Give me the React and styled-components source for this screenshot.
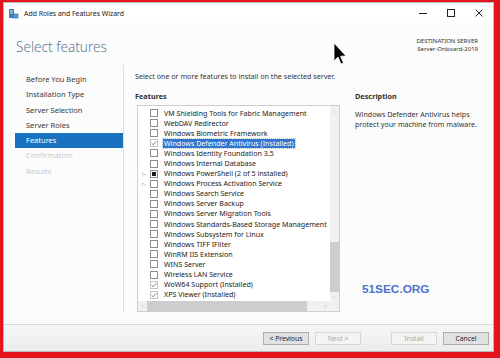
import React from "react";
import styled, { createGlobalStyle } from "styled-components";

const GlobalStyle = createGlobalStyle`
  html, body { margin: 0; padding: 0; background: #e3141b; }
  body { font-family: "Segoe UI", "Noto Sans", "Open Sans", sans-serif; }
`;

const Frame = styled.div`
  width: 500px;
  height: 358px;
  box-sizing: border-box;
  padding: 2px 6px 6px 3px;
  background: #e3141b;
  position: relative;
`;

const Window = styled.div`
  width: 100%;
  height: 100%;
  box-sizing: border-box;
  background: #fcfcfc;
  border: 1px solid #b9b9b9;
  display: flex;
  flex-direction: column;
  overflow: hidden;
`;

const TitleBar = styled.div`
  height: 20px;
  display: flex;
  align-items: center;
  padding-left: 4px;
  background: #ffffff;
  font-size: 6.9px;
  color: #1a1a1a;
`;

const TitleText = styled.span`
  margin-left: 5px;
  flex: 1;
`;

const WinButton = styled.div`
  width: 28px;
  height: 20px;
  display: flex;
  align-items: center;
  justify-content: center;
`;

const Header = styled.div`
  height: 42px;
  display: flex;
  justify-content: space-between;
  align-items: flex-start;
  padding: 0 15px 0 12px;
`;

const Heading = styled.h1`
  margin: 14px 0 0;
  font-size: 13.6px;
  font-weight: 300;
  color: #5d7b92;
`;

const Destination = styled.div`
  margin-top: 14px;
  font-size: 6px;
  line-height: 8px;
  text-align: right;
  color: #333;
`;

const Body = styled.div`
  flex: 1;
  display: flex;
  min-height: 0;
`;

const Nav = styled.div`
  width: 108px;
  padding: 7px 0 0 11px;
  border-right: 1px solid #dedede;
  margin-bottom: 12px;
  display: flex;
  flex-direction: column;
`;

const NavItem = styled.div`
  height: 15.3px;
  line-height: 15.3px;
  padding-left: 11px;
  font-size: 7.5px;
  color: ${(p) => (p.$disabled ? "#c9c9c9" : p.$active ? "#ffffff" : "#3a3a3a")};
  background: ${(p) => (p.$active ? "#1a71bf" : "transparent")};
`;

const Main = styled.div`
  flex: 1;
  display: flex;
  padding: 6px 0 0 11px;
`;

const Column = styled.div`
  width: 205px;
  flex-shrink: 0;
  display: flex;
  flex-direction: column;
`;

const Intro = styled.div`
  font-size: 7.15px;
  color: #333;
  height: 14px;
  white-space: nowrap;
`;

const Label = styled.div`
  font-size: 7.3px;
  font-weight: 700;
  color: #333;
  margin-top: 6px;
`;

const ListBox = styled.div`
  margin: 4px 0 0 2px;
  width: 203px;
  height: 207px;
  box-sizing: border-box;
  border: 1px solid #cfcfcf;
  background: #fff;
  display: flex;
  flex-direction: column;
`;

const ListArea = styled.div`
  flex: 1;
  display: flex;
  min-height: 0;
`;

const Rows = styled.div`
  flex: 1;
  min-width: 0;
  padding-top: 2px;
  overflow: hidden;
`;

const Row = styled.div`
  height: 10.1px;
  display: flex;
  align-items: center;
  white-space: nowrap;
  font-size: 7.1px;
  color: #222;
`;

const Expander = styled.div`
  width: 12px;
  flex-shrink: 0;
  padding-left: 4px;
  box-sizing: border-box;
  font-size: 5px;
  color: #888;
`;

const Box = styled.div`
  width: 8px;
  height: 8px;
  box-sizing: border-box;
  border: 1px solid ${(p) => (p.$installed ? "#c4c4c4" : "#8d8d8d")};
  background: #fff;
  display: flex;
  align-items: center;
  justify-content: center;
  flex-shrink: 0;
`;

const Mark = styled.div`
  width: 4px;
  height: 4px;
  background: #1b1b1b;
`;

const RowText = styled.span`
  margin-left: 5px;
  padding: 0 1px;
  line-height: 9px;
  flex-shrink: 0;
  color: ${(p) => (p.$selected ? "#fff" : "#222")};
  background: ${(p) => (p.$selected ? "#2f76cc" : "transparent")};
  outline: ${(p) => (p.$selected ? "1px dotted #9bc1ee" : "none")};
`;

const VScroll = styled.div`
  width: 9px;
  flex-shrink: 0;
  background: #f0f0f0;
  display: flex;
  flex-direction: column;
  align-items: stretch;
`;

const Arrow = styled.div`
  height: 9px;
  display: flex;
  align-items: center;
  justify-content: center;
  font-size: 5px;
  color: #a8a8a8;
  width: ${(p) => (p.$h ? "9px" : "auto")};
`;

const ScrollSpace = styled.div`
  flex: ${(p) => p.$grow};
`;

const Thumb = styled.div`
  background: #cdcdcd;
  flex: ${(p) => p.$grow};
`;

const HScroll = styled.div`
  height: 10px;
  display: flex;
  background: #f0f0f0;
`;

const Description = styled.div`
  margin-left: 15px;
  display: flex;
  flex-direction: column;
`;

const DescText = styled.div`
  margin-top: 8px;
  font-size: 7.1px;
  line-height: 10px;
  color: #333;
  width: 132px;
`;

const Watermark = styled.div`
  margin: 153px 0 0 7px;
  font-family: "Liberation Sans", Arial, sans-serif;
  font-weight: 700;
  font-size: 11.8px;
  color: #4d72cf;
`;

const Footer = styled.div`
  height: 26px;
  border-top: 1px solid #d9d9d9;
  background: linear-gradient(#f6f6f6, #ececec);
  display: flex;
  align-items: center;
  padding-left: 259px;
  gap: 6px;
`;

const Button = styled.div`
  width: 46px;
  height: 13px;
  box-sizing: border-box;
  border: 1px solid ${(p) => (p.$disabled ? "#d6d6d6" : "#adadad")};
  background: ${(p) => (p.$disabled ? "#f4f4f4" : "#e1e1e1")};
  color: ${(p) => (p.$disabled ? "#a8a8a8" : "#222")};
  font-size: 6.8px;
  display: flex;
  align-items: center;
  justify-content: center;
  margin-left: ${(p) => p.$gap || 0}px;
`;

const Cursor = styled.svg`
  position: absolute;
  left: 333px;
  top: 42px;
`;

const features = [
  { name: "VM Shielding Tools for Fabric Management" },
  { name: "WebDAV Redirector" },
  { name: "Windows Biometric Framework" },
  { name: "Windows Defender Antivirus (Installed)", installed: true, selected: true },
  { name: "Windows Identity Foundation 3.5" },
  { name: "Windows Internal Database" },
  { name: "Windows PowerShell (2 of 5 installed)", partial: true, expand: true },
  { name: "Windows Process Activation Service", expand: true },
  { name: "Windows Search Service" },
  { name: "Windows Server Backup" },
  { name: "Windows Server Migration Tools" },
  { name: "Windows Standards-Based Storage Management" },
  { name: "Windows Subsystem for Linux" },
  { name: "Windows TIFF IFilter" },
  { name: "WinRM IIS Extension" },
  { name: "WINS Server" },
  { name: "Wireless LAN Service" },
  { name: "WoW64 Support (Installed)", installed: true },
  { name: "XPS Viewer (Installed)", installed: true },
];

const navItems = [
  { label: "Before You Begin" },
  { label: "Installation Type" },
  { label: "Server Selection" },
  { label: "Server Roles" },
  { label: "Features", active: true },
  { label: "Confirmation", disabled: true },
  { label: "Results", disabled: true },
];

const Check = () => (
  <svg width="6" height="6" viewBox="0 0 6 6">
    <path d="M0.6 3.2 L2.3 4.8 L5.4 1" fill="none" stroke="#8a8a8a" strokeWidth="1" />
  </svg>
);

const WizardIcon = () => (
  <svg width="11" height="11" viewBox="0 0 11 11">
    <rect x="1" y="1" width="5" height="9" fill="#3d7fc1" />
    <rect x="2" y="2.5" width="3" height="1" fill="#cfe3f6" />
    <rect x="2" y="4.5" width="3" height="1" fill="#cfe3f6" />
    <rect x="5" y="6" width="5" height="4" fill="#5b9bd5" stroke="#2b5f96" strokeWidth="0.6" />
  </svg>
);

export default function App() {
  return (
    <>
      <GlobalStyle />
      <Frame>
        <Window>
          <TitleBar>
            <WizardIcon />
            <TitleText>Add Roles and Features Wizard</TitleText>
            <WinButton>
              <svg width="10" height="10"><path d="M1 5.5 H9" stroke="#222" strokeWidth="1" /></svg>
            </WinButton>
            <WinButton>
              <svg width="10" height="10"><rect x="1.5" y="1.5" width="7" height="7" fill="none" stroke="#222" /></svg>
            </WinButton>
            <WinButton>
              <svg width="10" height="10"><path d="M1.5 1.5 L8.5 8.5 M8.5 1.5 L1.5 8.5" stroke="#222" strokeWidth="1" /></svg>
            </WinButton>
          </TitleBar>
          <Header>
            <Heading>Select features</Heading>
            <Destination>
              DESTINATION SERVER
              <br />
              Server-Onboard-2019
            </Destination>
          </Header>
          <Body>
            <Nav>
              {navItems.map((n) => (
                <NavItem key={n.label} $active={n.active} $disabled={n.disabled}>
                  {n.label}
                </NavItem>
              ))}
            </Nav>
            <Main>
              <Column>
                <Intro>Select one or more features to install on the selected server.</Intro>
                <Label>Features</Label>
                <ListBox>
                  <ListArea>
                    <Rows>
                      {features.map((f) => (
                        <Row key={f.name}>
                          <Expander>{f.expand ? "▷" : ""}</Expander>
                          <Box $installed={f.installed}>
                            {f.installed && <Check />}
                            {f.partial && <Mark />}
                          </Box>
                          <RowText $selected={f.selected}>{f.name}</RowText>
                        </Row>
                      ))}
                    </Rows>
                    <VScroll>
                      <Arrow>︿</Arrow>
                      <ScrollSpace $grow={128} />
                      <Thumb $grow={50} />
                      <Arrow>﹀</Arrow>
                    </VScroll>
                  </ListArea>
                  <HScroll>
                    <Arrow $h>&lt;</Arrow>
                    <Thumb $grow={165} />
                    <ScrollSpace $grow={15} />
                    <Arrow $h>&gt;</Arrow>
                    <Arrow $h />
                  </HScroll>
                </ListBox>
              </Column>
              <Description>
                <Intro />
                <Label>Description</Label>
                <DescText>
                  Windows Defender Antivirus helps protect your machine from malware.
                </DescText>
                <Watermark>51SEC.ORG</Watermark>
              </Description>
            </Main>
          </Body>
          <Footer>
            <Button>&lt; Previous</Button>
            <Button $disabled>Next &gt;</Button>
            <Button $disabled $gap={24}>Install</Button>
            <Button>Cancel</Button>
          </Footer>
        </Window>
        <Cursor width="14" height="24" viewBox="0 0 14 24">
          <path d="M1 1 L1 19 L5 15 L8 22 L10.5 21 L7.6 14.2 L13 14 Z" fill="#000" stroke="#fff" strokeWidth="0.8" />
        </Cursor>
      </Frame>
    </>
  );
}
